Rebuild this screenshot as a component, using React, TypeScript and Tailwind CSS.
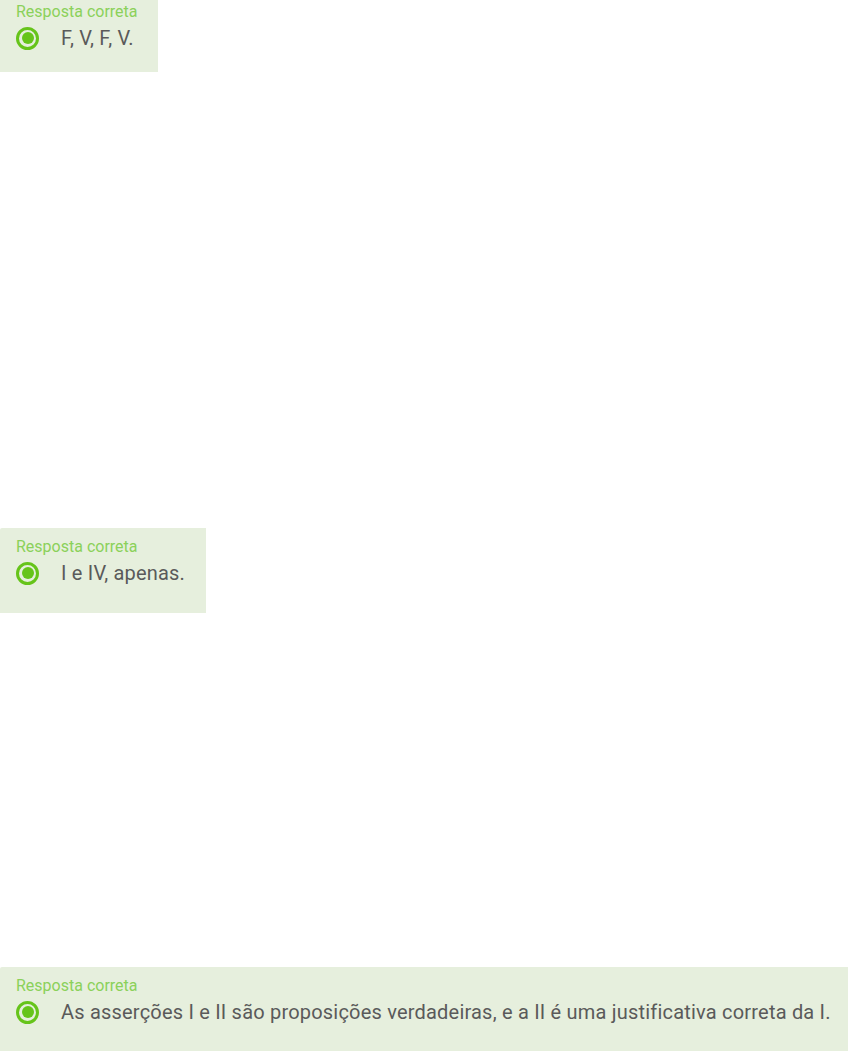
const ANSWERS = [
  { text: "F, V, F, V.", width: "w-[158px]", h: "h-[79px]", mt: "-mt-[7px]" },
  { text: "I e IV, apenas.", width: "w-[206px]", h: "h-[85px]", mt: "mt-[456px]" },
  {
    text: "As asserções I e II são proposições verdadeiras, e a II é uma justificativa correta da I.",
    width: "w-[848px]",
    h: "h-[85px]",
    mt: "mt-[354px]",
  },
] as const;

function Radio() {
  return (
    <span className="flex h-[23px] w-[23px] shrink-0 items-center justify-center rounded-full border-[3px] border-[#66c41a]">
      <span className="h-[12px] w-[12px] rounded-full bg-[#66c41a]" />
    </span>
  );
}

export default function App() {
  return (
    <main className="flex min-h-screen flex-col items-start overflow-hidden bg-white font-['Roboto',sans-serif]">
      {ANSWERS.map((a) => (
        <div key={a.text} className={`${a.width} ${a.h} ${a.mt} shrink-0 rounded-tl-[2px] bg-[#e6efdd] pl-4 pt-[9px]`}>
          <p className="text-[16px] leading-5 text-[#8bd15a]">Resposta correta</p>
          <div className="mt-[2px] flex h-7 items-center">
            <Radio />
            <span className="ml-[22px] whitespace-nowrap text-[20px] leading-7 tracking-[0.2px] text-[#5a5a5a]">
              {a.text}
            </span>
          </div>
        </div>
      ))}
    </main>
  );
}
